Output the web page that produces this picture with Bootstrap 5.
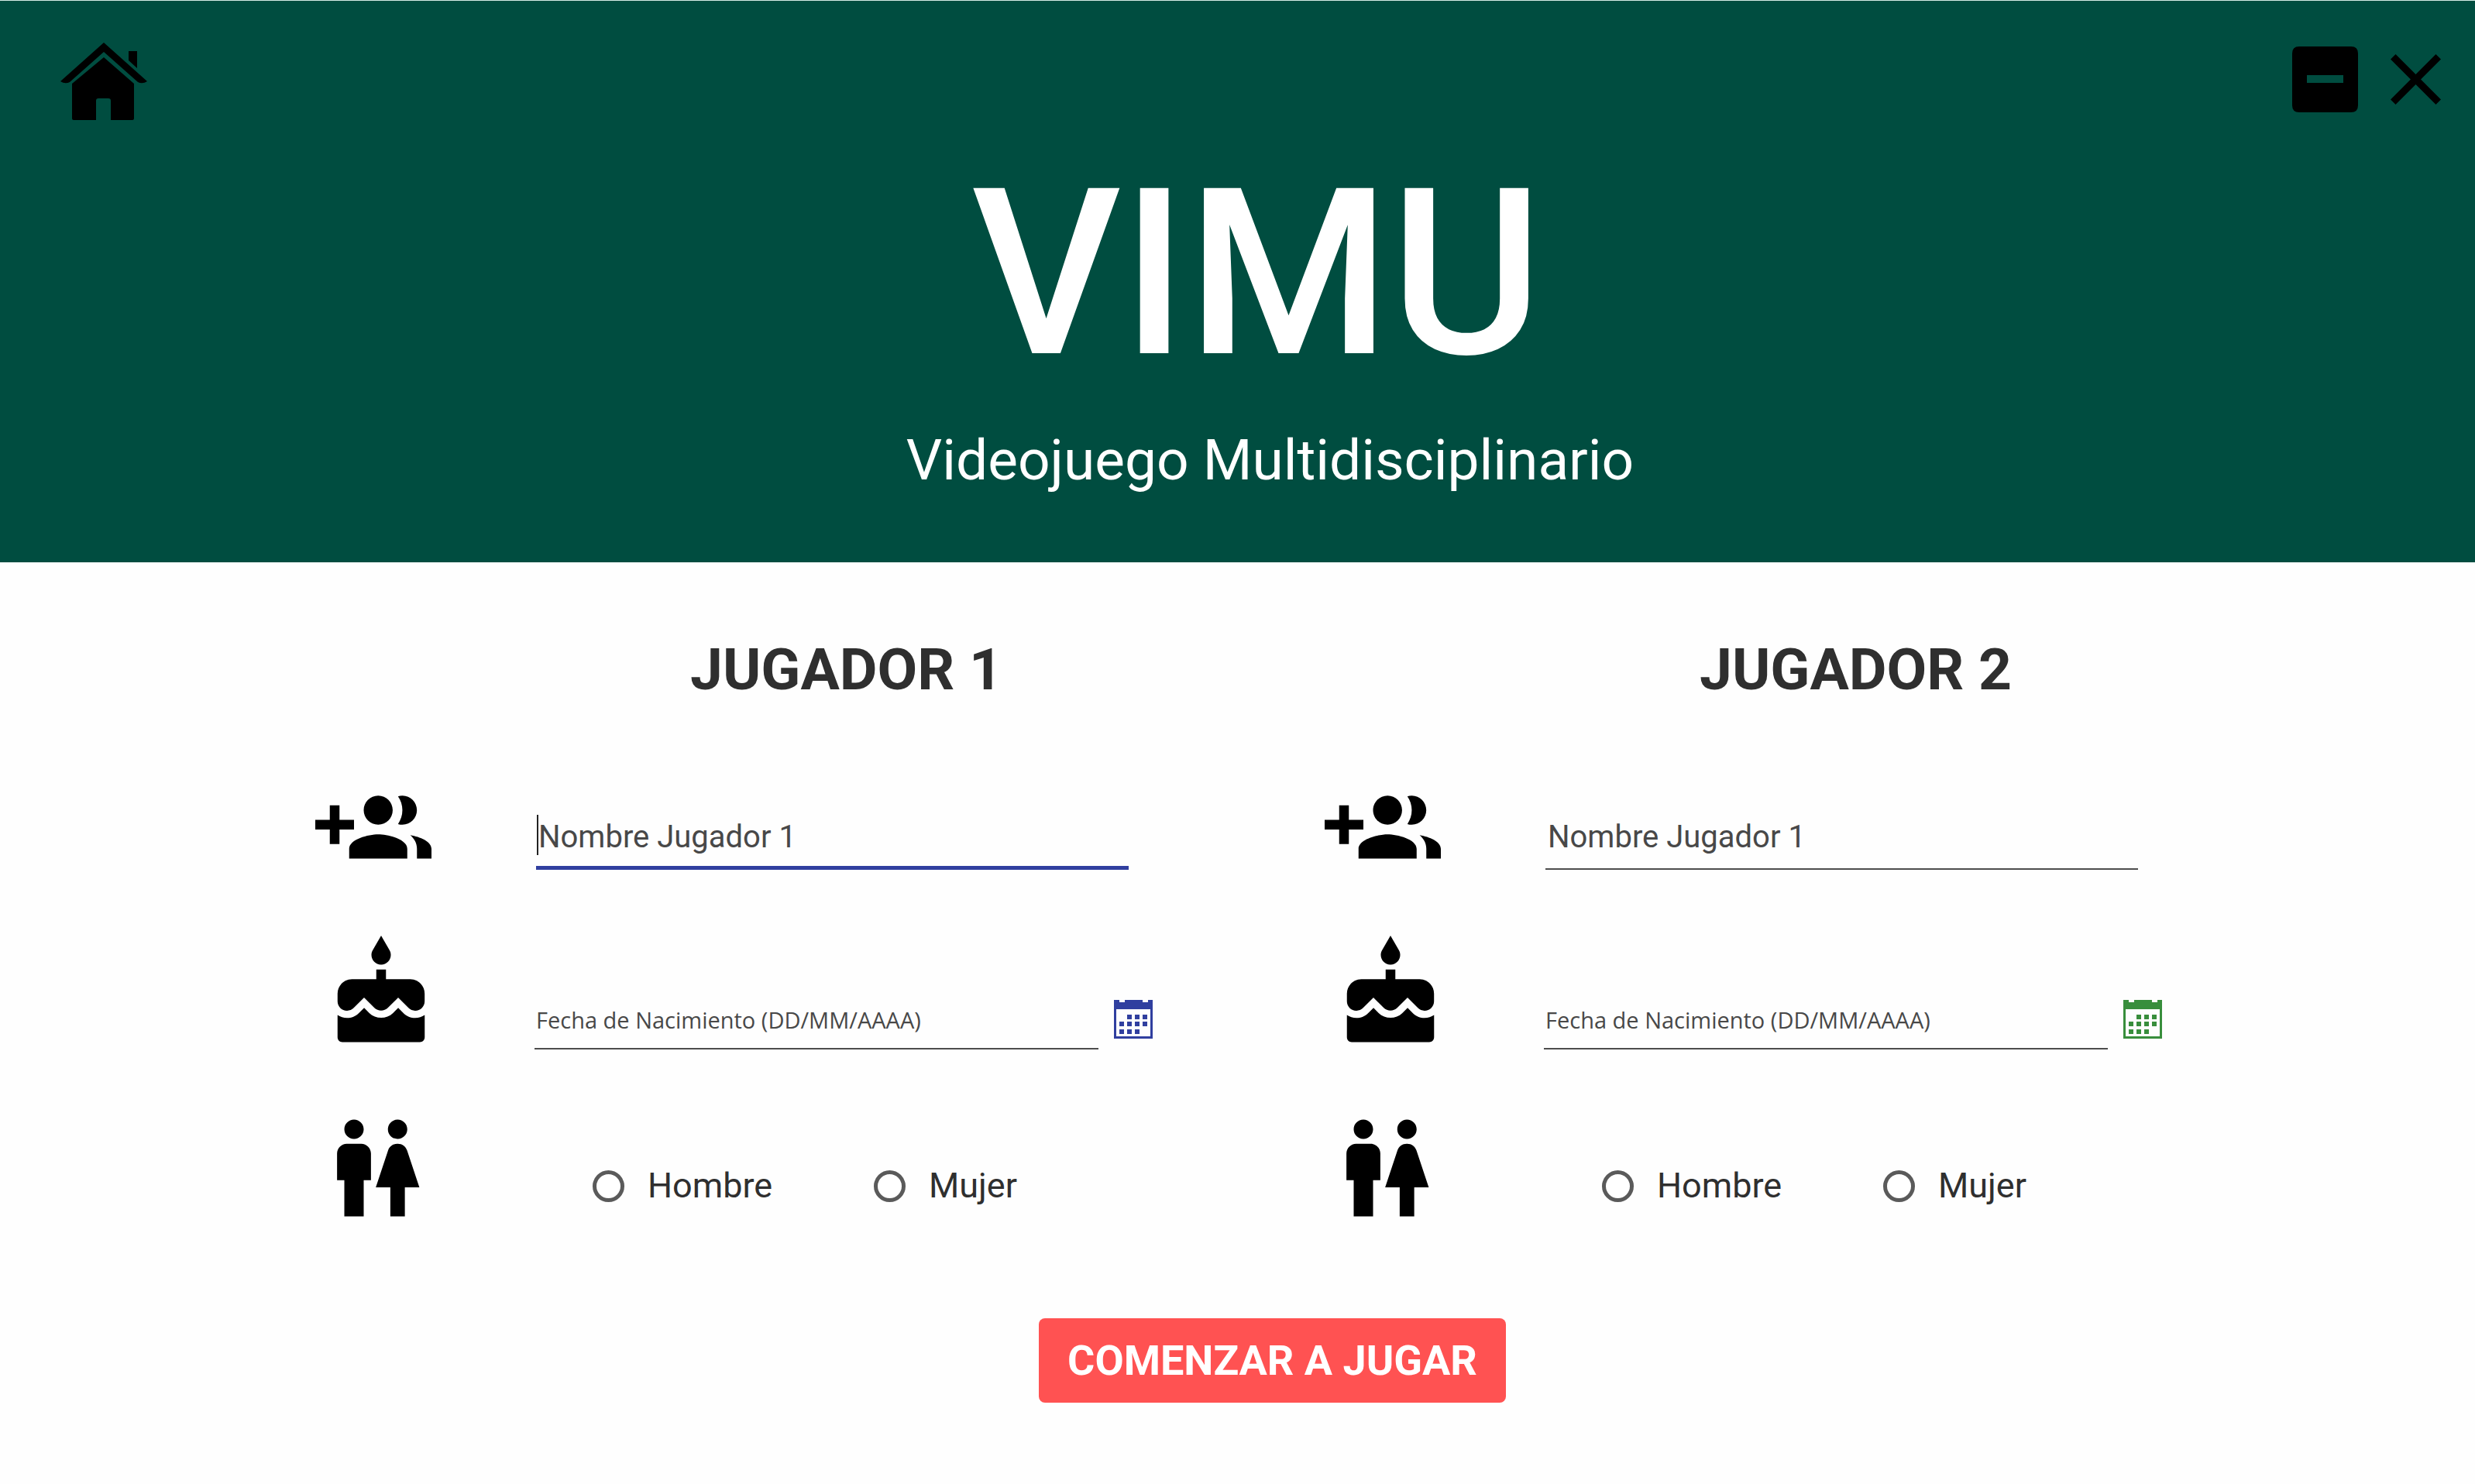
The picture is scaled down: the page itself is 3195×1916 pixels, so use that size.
<!DOCTYPE html>
<html lang="es">
<head>
<meta charset="utf-8">
<meta name="viewport" content="width=device-width, initial-scale=1">
<title>VIMU</title>
<link rel="stylesheet" href="https://cdn.jsdelivr.net/npm/bootstrap@5.3.0/dist/css/bootstrap.min.css">
<style>
  body { font-family: Roboto, "Liberation Sans", sans-serif; color: #2f2f2f; background: #fefefe; }
  .app-header { background: #004d40; border-top: 1px solid #d5ebe6; padding-bottom: 90px; }
  .top-bar { padding: 54px 44px 5px 77px; }
  .window-tools { gap: 42px; padding-bottom: 6px; }
  .tool-btn { line-height: 0; }
  .app-title { font-size: 300px; line-height: 300px; font-weight: 500; margin-top: 44px; padding-left: 50px; }
  .app-subtitle { font-size: 73px; line-height: 84px; margin-top: 48px; padding-left: 84px; }
  .players { padding: 94px 182px 0 407px; }
  .player { padding-right: 222px; }
  .player-name { font-size: 75px; line-height: 88px; margin-bottom: 88px; padding-left: 290px; }
  .icon-cell { flex: 0 0 283px; }
  .icon-cell svg { width: 150px; height: 150px; display: block; }
  .name-row { margin-bottom: 62px; }
  .date-row { margin-bottom: 75px; }
  .name-cell { padding: 0 31px 23px 2px; }
  .date-cell { gap: 20px; padding-bottom: 3px; }
  .line-input { border-radius: 0; border: 0; border-bottom: 2px solid #4d4d4d; background: transparent; color: #444; }
  .line-input::placeholder { color: #484848; opacity: 1; }
  .line-input:focus { box-shadow: none; }
  .name-input { font-size: 40px; line-height: 56px; height: 71px; padding: 0 0 13px 3px; }
  .name-input.is-current { border-bottom: 5px solid #303f9f; padding-bottom: 10px; }
  .date-input { font-family: "Open Sans", sans-serif; font-size: 29px; line-height: 40px; height: 59px; padding: 0 0 17px 2px; }
  .text-caret { left: 1px; top: 0; width: 2px; height: 52px; background: #222; }
  .calendar-btn { margin-bottom: 14px; line-height: 0; color: #303f9f; }
  .calendar-btn.green { color: #388e3c; }
  .gender-cell { padding: 46px 0 0 75px; }
  .gender-option { flex: 0 0 363px; gap: 30px; }
  .gender-option .form-check-input { width: 41px; height: 41px; border: 5px solid #5a5a5a; }
  .gender-option label { font-size: 45px; line-height: 54px; }
  .start-area { padding: 119px 0 0 90px; }
  .start-btn { background: #ff5252; color: #fff; font-size: 54px; line-height: 65px; font-weight: 700; padding: 22px 37px; border-radius: 8px; border: 0; }
</style>
<script src="https://cdn.jsdelivr.net/npm/bootstrap@5.3.0/dist/js/bootstrap.bundle.min.js"></script>
</head>
<body>
<svg class="d-none" aria-hidden="true">
  <symbol id="ic-group" viewBox="0 0 24 24"><path d="M8 10H5V7H3v3H0v2h3v3h2v-3h3v-2zm10 1c1.66 0 2.99-1.34 2.99-3S19.66 5 18 5c-.32 0-.63.05-.91.14.57.81.9 1.79.9 2.86s-.34 2.04-.9 2.86c.28.09.59.14.91.14zm-5 0c1.66 0 2.99-1.34 2.99-3S14.66 5 13 5c-1.66 0-3 1.34-3 3s1.34 3 3 3zm6.62 2.16c.83.73 1.38 1.66 1.38 2.84v2h3v-2c0-1.54-2.37-2.49-4.38-2.84zM13 13c-2 0-6 1-6 3v2h12v-2c0-2-4-3-6-3z"/></symbol>
  <symbol id="ic-cake" viewBox="-1.6 0 24 24"><path d="M12 6c1.11 0 2-.9 2-2 0-.38-.1-.73-.29-1.03L12 0l-1.71 2.97c-.19.3-.29.65-.29 1.03 0 1.1.9 2 2 2zm4.6 9.99l-1.07-1.07-1.08 1.07c-1.3 1.3-3.58 1.31-4.89 0l-1.07-1.07-1.09 1.07C6.75 16.64 5.88 17 4.96 17c-.73 0-1.4-.23-1.96-.61V21c0 .55.45 1 1 1h16c.55 0 1-.45 1-1v-4.61c-.56.38-1.23.61-1.96.61-.92 0-1.79-.36-2.44-1.01zM18 9h-5V7h-2v2H6c-1.66 0-3 1.34-3 3v1.54c0 1.08.88 1.96 1.96 1.96.52 0 1.02-.2 1.38-.57l2.14-2.13 2.13 2.13c.74.74 2.03.74 2.77 0l2.14-2.13 2.13 2.13c.37.37.86.57 1.38.57 1.08 0 1.96-.88 1.96-1.96V12C21 10.34 19.66 9 18 9z"/></symbol>
  <symbol id="ic-wc" viewBox="-.5 0 24 24"><path d="M5.5 22v-7.5H4V9c0-1.1.9-2 2-2h3c1.1 0 2 .9 2 2v5.5H9.5V22h-4zM18 22v-6h3l-2.54-7.63C18.18 7.55 17.42 7 16.56 7h-.12c-.86 0-1.63.55-1.9 1.37L12 16h3v6h3zM7.5 6c1.11 0 2-.89 2-2s-.89-2-2-2-2 .89-2 2 .89 2 2 2zm9 0c1.11 0 2-.89 2-2s-.89-2-2-2-2 .89-2 2 .89 2 2 2z"/></symbol>
  <symbol id="ic-calendar" viewBox="0 0 50 50"><path fill-rule="evenodd" d="M0 0h7v3h7V0h23v3h7V0h6v50H0zM3 12v35h44V12zM17 19h6v6h-6zM27 19h6v6h-6zM37 19h6v6h-6zM7 28h6v6H7zM17 28h6v6h-6zM27 28h6v6h-6zM37 28h6v6h-6zM7 38h6v6H7zM17 38h6v6h-6zM27 38h6v6h-6z"/></symbol>
</svg>

<header class="app-header text-white text-center">
  <div class="top-bar d-flex justify-content-between align-items-center">
    <button type="button" class="tool-btn border-0 bg-transparent p-0" aria-label="Inicio">
      <svg width="113" height="100" viewBox="0 0 113 100"><path d="M57 0L113 50Q107 54 101 51L57 12L13 51Q7 54 1 50ZM89 11h11v22L89 23ZM57 19L96 53V98Q96 100 94 100H66V75Q66 72 63 72H50Q47 72 47 75V100H18Q16 100 16 98V53Z"/></svg>
    </button>
    <div class="window-tools d-flex align-items-center">
      <button type="button" class="tool-btn border-0 bg-transparent p-0" aria-label="Minimizar">
        <svg width="85" height="85" viewBox="0 0 85 85"><path fill-rule="evenodd" d="M9 0H76Q85 0 85 9V76Q85 85 76 85H9Q0 85 0 76V9Q0 0 9 0ZM19 37V47H66V37Z"/></svg>
      </button>
      <button type="button" class="tool-btn border-0 bg-transparent p-0" aria-label="Cerrar">
        <svg width="65" height="65" viewBox="5 5 14 14"><path d="M19 6.41L17.59 5 12 10.59 6.41 5 5 6.41 10.59 12 5 17.59 6.41 19 12 13.41 17.59 19 19 17.59 13.41 12z"/></svg>
      </button>
    </div>
  </div>
  <h1 class="app-title mb-0">VIMU</h1>
  <p class="app-subtitle mb-0">Videojuego Multidisciplinario</p>
</header>

<form>
  <div class="players">
    <div class="row g-0">
      <section class="col-6 player">
        <h2 class="player-name fw-bold text-center">JUGADOR 1</h2>
        <div class="name-row d-flex">
          <label class="icon-cell" for="name1" aria-label="Nombre del jugador 1"><svg><use href="#ic-group"/></svg></label>
          <div class="name-cell flex-fill d-flex align-items-end">
            <div class="position-relative w-100">
              <input id="name1" type="text" class="form-control line-input name-input is-current" placeholder="Nombre Jugador 1">
              <span class="text-caret position-absolute"></span>
            </div>
          </div>
        </div>
        <div class="date-row d-flex">
          <label class="icon-cell" for="date1" aria-label="Fecha de nacimiento"><svg><use href="#ic-cake"/></svg></label>
          <div class="date-cell flex-fill d-flex align-items-end">
            <input id="date1" type="text" class="form-control line-input date-input" placeholder="Fecha de Nacimiento (DD/MM/AAAA)">
            <button type="button" class="calendar-btn border-0 bg-transparent p-0" aria-label="Abrir calendario"><svg width="50" height="50" fill="currentColor"><use href="#ic-calendar"/></svg></button>
          </div>
        </div>
        <div class="d-flex">
          <div class="icon-cell"><svg aria-hidden="true"><use href="#ic-wc"/></svg></div>
          <div class="gender-cell flex-fill d-flex align-items-center">
            <div class="gender-option d-flex align-items-center"><input class="form-check-input m-0" type="radio" name="gender1" id="male1"><label for="male1">Hombre</label></div>
            <div class="gender-option d-flex align-items-center"><input class="form-check-input m-0" type="radio" name="gender1" id="female1"><label for="female1">Mujer</label></div>
          </div>
        </div>
      </section>

      <section class="col-6 player">
        <h2 class="player-name fw-bold text-center">JUGADOR 2</h2>
        <div class="name-row d-flex">
          <label class="icon-cell" for="name2" aria-label="Nombre del jugador 2"><svg><use href="#ic-group"/></svg></label>
          <div class="name-cell flex-fill d-flex align-items-end">
            <input id="name2" type="text" class="form-control line-input name-input" placeholder="Nombre Jugador 1">
          </div>
        </div>
        <div class="date-row d-flex">
          <label class="icon-cell" for="date2" aria-label="Fecha de nacimiento"><svg><use href="#ic-cake"/></svg></label>
          <div class="date-cell flex-fill d-flex align-items-end">
            <input id="date2" type="text" class="form-control line-input date-input" placeholder="Fecha de Nacimiento (DD/MM/AAAA)">
            <button type="button" class="calendar-btn green border-0 bg-transparent p-0" aria-label="Abrir calendario"><svg width="50" height="50" fill="currentColor"><use href="#ic-calendar"/></svg></button>
          </div>
        </div>
        <div class="d-flex">
          <div class="icon-cell"><svg aria-hidden="true"><use href="#ic-wc"/></svg></div>
          <div class="gender-cell flex-fill d-flex align-items-center">
            <div class="gender-option d-flex align-items-center"><input class="form-check-input m-0" type="radio" name="gender2" id="male2"><label for="male2">Hombre</label></div>
            <div class="gender-option d-flex align-items-center"><input class="form-check-input m-0" type="radio" name="gender2" id="female2"><label for="female2">Mujer</label></div>
          </div>
        </div>
      </section>
    </div>
  </div>
  <div class="start-area text-center">
    <button type="submit" class="btn start-btn">COMENZAR A JUGAR</button>
  </div>
</form>
</body>
</html>
